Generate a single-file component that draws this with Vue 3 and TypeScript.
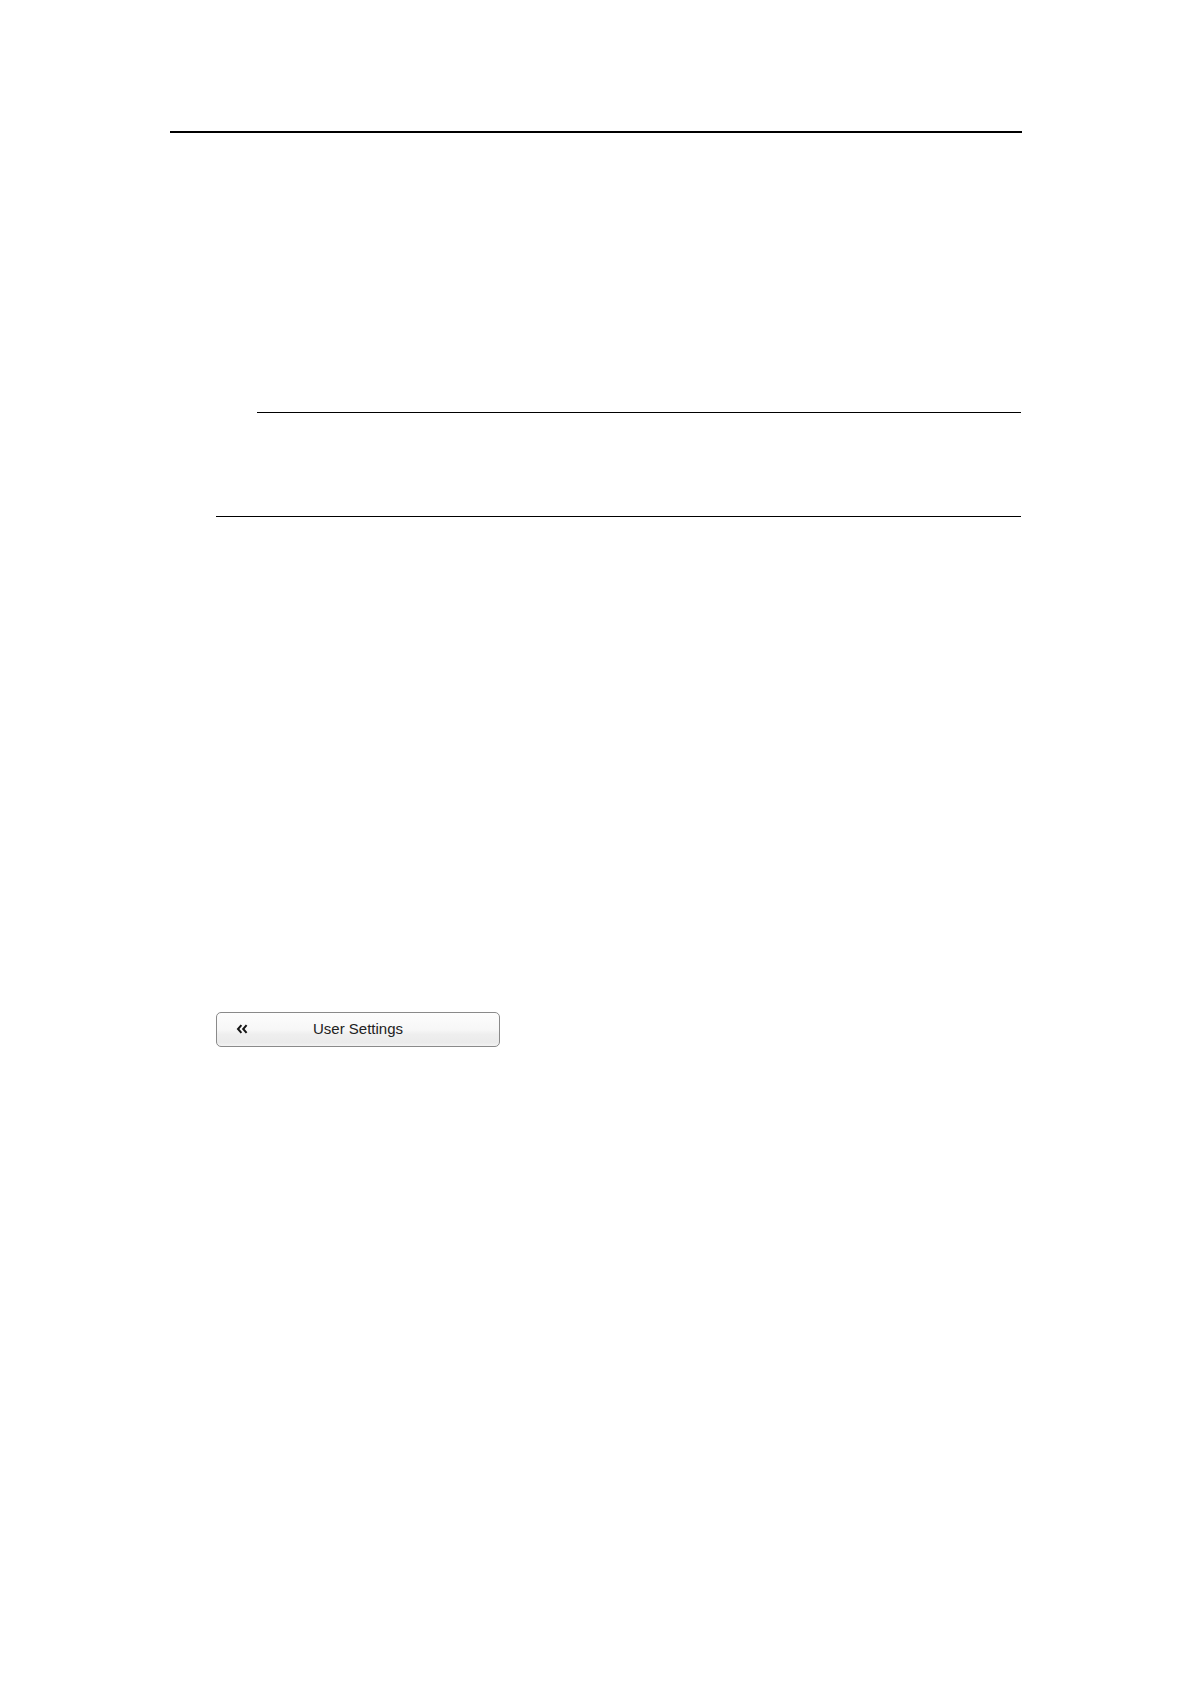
<script setup lang="ts">
const title: string = 'User Settings'
</script>

<template>
  <main class="page">
    <hr class="rule rule-header" />
    <hr class="rule rule-nested" />
    <hr class="rule rule-section" />
    <button class="back" type="button">
      <svg class="chevrons" viewBox="0 0 12 10" aria-hidden="true">
        <path d="M5.4 1.2 L2 5 L5.4 8.8 M10.6 1.2 L7.2 5 L10.6 8.8" />
      </svg>
      <span class="label">{{ title }}</span>
    </button>
  </main>
</template>

<style>
body {
  margin: 0;
  background: #fff;
}
</style>

<style scoped>
.page {
  box-sizing: border-box;
  min-height: 100vh;
  padding: 131px 170px 40px;
  display: flex;
  flex-direction: column;
  background: #fff;
  font-family: "Liberation Sans", Arial, sans-serif;
}

.rule {
  align-self: stretch;
  height: 1px;
  margin: 0;
  border: 0;
  background: #000;
}

.rule-header {
  height: 2px;
  margin-right: -1px;
}

.rule-nested {
  margin: 279px 0 0 87px;
}

.rule-section {
  margin: 103px 0 0 46px;
}

.back {
  box-sizing: border-box;
  width: 284px;
  height: 35px;
  margin: 495px 0 0 46px;
  padding: 0 19px 2px;
  display: grid;
  grid-template-columns: 12px 1fr 12px;
  align-items: center;
  border: 1px solid #8a8a8a;
  border-radius: 5px;
  background: linear-gradient(#fdfdfd 0%, #f7f7f7 50%, #eee 65%, #ebebeb 90%, #f3f3f3 100%);
  color: #222;
  font: 15px/20px "Liberation Sans", Arial, sans-serif;
}

.chevrons {
  width: 12px;
  height: 10px;
  fill: none;
  stroke: #151515;
  stroke-width: 2;
}

.label {
  text-align: center;
}
</style>
